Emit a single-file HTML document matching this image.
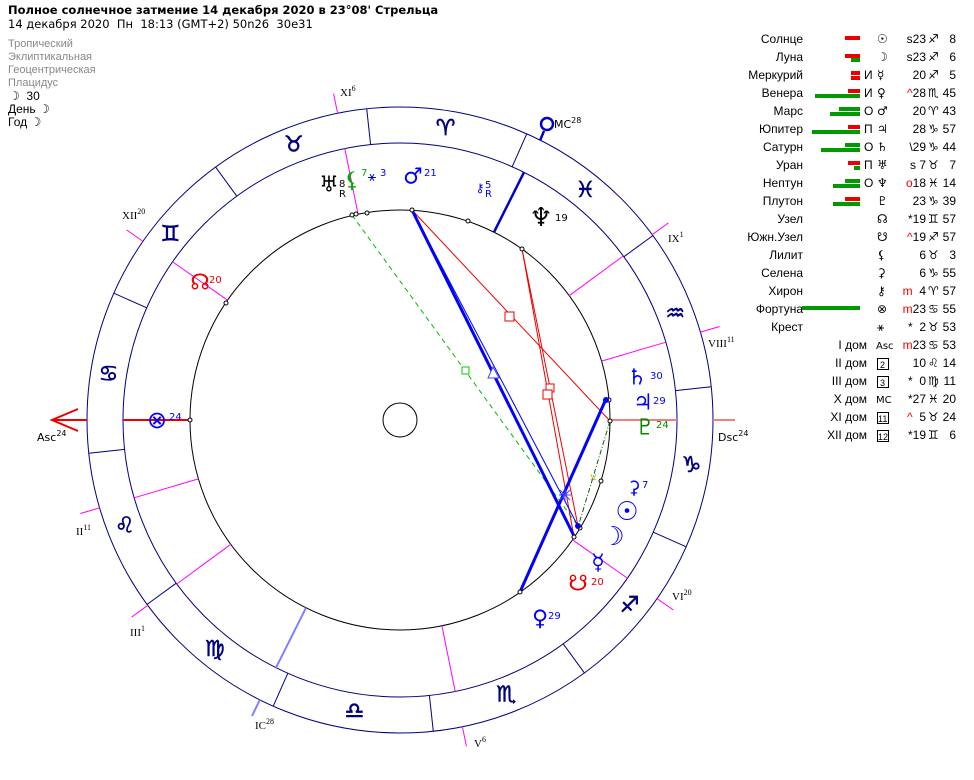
<!DOCTYPE html>
<html><head><meta charset="utf-8"><style>
body{margin:0;width:974px;height:780px;background:#fff;position:relative;overflow:hidden;font-family:"Liberation Sans","DejaVu Sans",sans-serif;}
.t{position:absolute;white-space:nowrap;}
.g{color:#888;font-size:11px;}
.b{position:absolute;height:4px;}
.r{background:#e00;}.gr{background:#090;}
</style></head><body>
<div class="t" style="left:8px;top:3px;font-size:11.5px;font-weight:bold;font-family:'DejaVu Sans',sans-serif;">Полное солнечное затмение 14 декабря 2020 в 23°08' Стрельца</div>
<div class="t" style="left:8px;top:17px;font-size:11.5px;font-family:'DejaVu Sans',sans-serif;">14 декабря 2020&nbsp; Пн&nbsp; 18:13 (GMT+2) 50n26&nbsp; 30e31</div>
<div class="t g" style="left:8px;top:38px;">Тропический</div>
<div class="t g" style="left:8px;top:51px;">Эклиптикальная</div>
<div class="t g" style="left:8px;top:64px;">Геоцентрическая</div>
<div class="t g" style="left:8px;top:77px;">Плацидус</div>
<div class="t" style="left:9px;top:89px;font-size:12px;">☽&nbsp; 30</div>
<div class="t" style="left:8px;top:102px;font-size:12px;">День ☽</div>
<div class="t" style="left:8px;top:115px;font-size:12px;">Год ☽</div>

<svg width="974" height="780" style="position:absolute;left:0;top:0" font-family="DejaVu Sans, sans-serif">
<g fill="none" stroke="#000080" stroke-width="1">
<circle cx="400" cy="420" r="313"/><circle cx="400" cy="420" r="277"/>
<line x1="512.2" y1="166.7" x2="526.8" y2="133.8"/><line x1="370.6" y1="144.6" x2="366.7" y2="108.8"/>
<line x1="236.8" y1="196.2" x2="215.6" y2="167.1"/><line x1="146.7" y1="307.8" x2="113.8" y2="293.2"/>
<line x1="124.6" y1="449.4" x2="88.8" y2="453.3"/><line x1="176.2" y1="583.2" x2="147.1" y2="604.4"/>
<line x1="287.8" y1="673.3" x2="273.2" y2="706.2"/><line x1="429.4" y1="695.4" x2="433.3" y2="731.2"/>
<line x1="563.2" y1="643.8" x2="584.4" y2="672.9"/><line x1="653.3" y1="532.2" x2="686.2" y2="546.8"/>
<line x1="675.4" y1="390.6" x2="711.2" y2="386.7"/><line x1="623.8" y1="256.8" x2="652.9" y2="235.6"/>
</g>
<circle cx="400" cy="420" r="210" fill="none" stroke="#000"/>
<circle cx="400" cy="420" r="17" fill="none" stroke="#000"/>
<g stroke="#f0f" stroke-width="1">
<line x1="358.1" y1="214.2" x2="344.8" y2="148.6"/><line x1="227.6" y1="300.2" x2="172.6" y2="261.9"/>
<line x1="198.4" y1="478.9" x2="134.1" y2="497.8"/><line x1="230.8" y1="544.3" x2="176.8" y2="584"/>
<line x1="441.9" y1="625.8" x2="455.2" y2="691.4"/><line x1="572.4" y1="539.8" x2="627.4" y2="578.1"/>
<line x1="601.6" y1="361.1" x2="665.9" y2="342.2"/><line x1="569.2" y1="295.7" x2="623.2" y2="256"/>
<line x1="337.6" y1="113.3" x2="333.6" y2="93.7"/><line x1="143" y1="241.4" x2="126.6" y2="229.9"/>
<line x1="99.6" y1="507.9" x2="80.4" y2="513.5"/><line x1="147.8" y1="605.3" x2="131.6" y2="617.1"/>
<line x1="462.4" y1="726.7" x2="466.4" y2="746.3"/><line x1="657" y1="598.6" x2="673.4" y2="610"/>
<line x1="700.4" y1="332.1" x2="719.6" y2="326.5"/><line x1="652.2" y1="234.7" x2="668.4" y2="222.9"/>
</g>
<line x1="494" y1="232.2" x2="524" y2="172.3" stroke="#00c" stroke-width="2.5"/>
<line x1="540.2" y1="140.1" x2="544" y2="131" stroke="#00c" stroke-width="2.5"/>
<circle cx="547" cy="124" r="6" fill="none" stroke="#00c" stroke-width="2.5"/>
<line x1="306" y1="607.8" x2="276" y2="667.7" stroke="#8080ff" stroke-width="2"/>
<line x1="259.8" y1="699.9" x2="252" y2="716" stroke="#8080ff" stroke-width="2"/>
<line x1="190" y1="420" x2="123" y2="420" stroke="#e00" stroke-width="2"/>
<line x1="87" y1="420" x2="52" y2="420" stroke="#e00" stroke-width="2"/>
<polyline points="78,409 52,420 78,431" fill="none" stroke="#e00" stroke-width="2"/>
<line x1="610" y1="420" x2="677" y2="420" stroke="#f08080" stroke-width="2"/>
<line x1="713" y1="420" x2="735" y2="420" stroke="#f08080" stroke-width="2"/>
<line x1="352" y1="215" x2="578" y2="526" stroke="#0b0" stroke-dasharray="5,4"/>
<rect x="462" y="367" width="7" height="7" fill="#fff" stroke="#0c0"/>
<line x1="610" y1="421" x2="578" y2="527" stroke="#060" stroke-dasharray="5,2,1,2"/>
<line x1="412" y1="210" x2="610" y2="421" stroke="#e00"/>
<rect x="505" y="312" width="9" height="9" fill="#fff" stroke="#e00"/>
<line x1="522" y1="249" x2="578" y2="526" stroke="#e00"/>
<line x1="522" y1="249" x2="574" y2="537" stroke="#e00"/>
<rect x="546" y="384" width="8" height="8" fill="#fff" stroke="#e00"/>
<rect x="543" y="390" width="9" height="9" fill="#fff" stroke="#e00"/>
<line x1="412" y1="210" x2="578" y2="526" stroke="#00f"/>
<line x1="412" y1="210" x2="574" y2="536" stroke="#00f" stroke-width="3"/>
<line x1="520" y1="592" x2="606" y2="399" stroke="#00f" stroke-width="3"/>
<polygon points="493,367 488,378 499,378" fill="#fff" stroke="#44f"/>
<path d="M559 495h12M565 489v12M560 490l10 10M570 490l-10 10" stroke="#44f" stroke-width="1"/>
<text x="590" y="480" font-size="10" fill="#990">⚺</text>
<g fill="#fff" stroke="#000"><circle cx="412" cy="210" r="2"/><circle cx="574" cy="537" r="2"/><circle cx="580" cy="528" r="2"/><circle cx="520" cy="592" r="2"/><circle cx="609" cy="400" r="2"/><circle cx="610" cy="421" r="2"/><circle cx="601" cy="481" r="2"/><circle cx="522" cy="249" r="2"/><circle cx="352" cy="215" r="2"/><circle cx="356" cy="214" r="2"/><circle cx="367" cy="213" r="2"/><circle cx="468" cy="221" r="2"/><circle cx="226" cy="303" r="2"/><circle cx="190" cy="420" r="2"/></g>
<circle cx="606" cy="400" r="3" fill="#00f"/><circle cx="578" cy="526" r="3" fill="#00f"/>
<g fill="#000080" font-size="22" text-anchor="middle" dominant-baseline="central" stroke="#000080" stroke-width="0.6">
<text x="445.6" y="128.5">♈</text><text x="293.8" y="144.8">♉</text><text x="170.4" y="234.7">♊</text>
<text x="108.5" y="374.4">♋</text><text x="124.8" y="526.2">♌</text><text x="214.7" y="649.6">♍</text>
<text x="354.4" y="711.5">♎</text><text x="506.2" y="695.2">♏</text><text x="629.6" y="605.3">♐</text>
<text x="691.5" y="465.6">♑</text><text x="675.2" y="313.8">♒</text><text x="585.3" y="190.4">♓</text>
</g>
<g font-size="22" text-anchor="middle" dominant-baseline="central">
<text x="329" y="185" fill="#000">♅</text>
<text x="352" y="181" fill="#0a0">⚸</text>
<text x="413" y="177" fill="#00f">♂</text>
<text x="480" y="188" fill="#00f" font-size="12">⚷</text>
<text x="541" y="218" fill="#000" font-size="26">♆</text>
<text x="637" y="378" fill="#00f">♄</text>
<text x="643" y="403" fill="#00f">♃</text>
<text x="645" y="428" fill="#080">♇</text>
<text x="634" y="488" fill="#00f" font-size="18">⚳</text>
<text x="627" y="512" fill="#00f" font-size="26">☉</text>
<text x="613" y="537" fill="#00f" font-size="26">☽</text>
<text x="598" y="563" fill="#00f">☿</text>
<text x="578" y="584" fill="#e00">☋</text>
<text x="540" y="619" fill="#00f">♀</text>
<text x="200" y="283" fill="#e00">☊</text>
<text x="157" y="420" fill="#00f" font-size="24">⊗</text>
<text x="372" y="177" fill="#00f" font-size="14">⚹</text>
</g>
<g font-size="10">
<text x="339" y="187" fill="#000">8</text><text x="339" y="197" fill="#000">R</text>
<text x="361" y="176" fill="#0a0">7</text><text x="380" y="176" fill="#00f">3</text>
<text x="424" y="176" fill="#00f">21</text>
<text x="485" y="188" fill="#00f">5</text><text x="485" y="197" fill="#00f">R</text>
<text x="555" y="221" fill="#000">19</text>
<text x="650" y="379" fill="#00f">30</text><text x="653" y="404" fill="#00f">29</text>
<text x="656" y="428" fill="#080">24</text><text x="642" y="488" fill="#00f">7</text>
<text x="591" y="585" fill="#e00">20</text><text x="548" y="619" fill="#00f">29</text>
<text x="209" y="283" fill="#e00">20</text><text x="169" y="420" fill="#00f">24</text>
</g>
<g font-size="11" fill="#000" font-family="Liberation Serif, serif">
<text x="340" y="96">XI<tspan font-size="8" dy="-5">6</tspan></text>
<text x="122" y="219">XII<tspan font-size="8" dy="-5">20</tspan></text>
<text x="76" y="535">II<tspan font-size="8" dy="-5">11</tspan></text>
<text x="130" y="636">III<tspan font-size="8" dy="-5">1</tspan></text>
<text x="255" y="729">IC<tspan font-size="8" dy="-5">28</tspan></text>
<text x="474" y="747">V<tspan font-size="8" dy="-5">6</tspan></text>
<text x="672" y="600">VI<tspan font-size="8" dy="-5">20</tspan></text>
<text x="708" y="347">VIII<tspan font-size="8" dy="-5">11</tspan></text>
<text x="668" y="242">IX<tspan font-size="8" dy="-5">1</tspan></text>
</g>
<g font-size="11" fill="#000">
<text x="37" y="441">Asc<tspan font-size="8" dy="-5">24</tspan></text>
<text x="718" y="441">Dsc<tspan font-size="8" dy="-5">24</tspan></text>
<text x="554" y="128">MC<tspan font-size="8" dy="-5">28</tspan></text>
</g>
</svg>

<div style="position:absolute;left:0;top:0;width:974px;font-size:12px;">
<div class="b r" style="left:845px;top:36px;width:15px"></div>
<div class="b r" style="left:845px;top:54px;width:15px"></div><div class="b gr" style="left:851px;top:58px;width:9px"></div>
<div class="b r" style="left:851px;top:71px;width:9px"></div><div class="b r" style="left:851px;top:76px;width:9px"></div>
<div class="b r" style="left:848px;top:89px;width:12px"></div><div class="b gr" style="left:815px;top:94px;width:45px"></div>
<div class="b gr" style="left:839px;top:107px;width:21px"></div><div class="b gr" style="left:830px;top:112px;width:30px"></div>
<div class="b r" style="left:848px;top:125px;width:12px"></div><div class="b gr" style="left:812px;top:130px;width:48px"></div>
<div class="b gr" style="left:845px;top:143px;width:15px"></div><div class="b gr" style="left:821px;top:148px;width:39px"></div>
<div class="b r" style="left:848px;top:161px;width:12px"></div><div class="b gr" style="left:854px;top:166px;width:6px"></div>
<div class="b gr" style="left:845px;top:179px;width:15px"></div><div class="b gr" style="left:833px;top:184px;width:27px"></div>
<div class="b r" style="left:845px;top:197px;width:15px"></div><div class="b gr" style="left:833px;top:202px;width:27px"></div>
<div class="b gr" style="left:802px;top:306px;width:58px"></div>
</div>
<svg width="974" height="780" style="position:absolute;left:0;top:0" font-size="12" font-family="Liberation Sans, DejaVu Sans, sans-serif">
<g text-anchor="end" fill="#000">
<text x="803" y="43">Солнце</text><text x="803" y="61">Луна</text><text x="803" y="79">Меркурий</text>
<text x="803" y="97">Венера</text><text x="803" y="115">Марс</text><text x="803" y="133">Юпитер</text>
<text x="803" y="151">Сатурн</text><text x="803" y="169">Уран</text><text x="803" y="187">Нептун</text>
<text x="803" y="205">Плутон</text><text x="803" y="223">Узел</text><text x="803" y="241">Южн.Узел</text>
<text x="803" y="259">Лилит</text><text x="803" y="277">Селена</text><text x="803" y="295">Хирон</text>
<text x="803" y="313">Фортуна</text><text x="803" y="331">Крест</text>
<text x="867" y="349">I дом</text><text x="867" y="367">II дом</text><text x="867" y="385">III дом</text>
<text x="867" y="403">X дом</text><text x="867" y="421">XI дом</text><text x="867" y="439">XII дом</text>
</g>
<g fill="#000">
<text x="864" y="79">И</text><text x="864" y="97">И</text><text x="864" y="115">О</text><text x="864" y="133">П</text>
<text x="864" y="151">О</text><text x="864" y="169">П</text><text x="864" y="187">О</text>
</g>
<g fill="#000" font-family="DejaVu Sans, sans-serif" font-size="12">
<text x="877" y="43">☉</text><text x="877" y="61">☽</text><text x="877" y="79">☿</text><text x="877" y="97">♀</text>
<text x="877" y="115">♂</text><text x="877" y="133">♃</text><text x="877" y="151">♄</text><text x="877" y="169">♅</text>
<text x="877" y="187">♆</text><text x="877" y="205">♇</text><text x="877" y="223">☊</text><text x="877" y="241">☋</text>
<text x="877" y="259">⚸</text><text x="877" y="277">⚳</text><text x="877" y="295">⚷</text><text x="877" y="313">⊗</text>
<text x="877" y="331">⚹</text><text x="876" y="349" font-size="10">Asc</text><text x="876" y="403" font-size="10">MC</text>
</g>
<g fill="none" stroke="#000"><rect x="877.5" y="358.5" width="11" height="11"/><rect x="877.5" y="376.5" width="11" height="11"/><rect x="877.5" y="412.5" width="11" height="11"/><rect x="877.5" y="430.5" width="11" height="11"/></g>
<g font-size="9" fill="#000"><text x="880" y="368">2</text><text x="880" y="386">3</text><text x="878" y="422">11</text><text x="878" y="440">12</text></g>
<g text-anchor="end" fill="#000">
<text x="926" y="43">s23</text><text x="926" y="61">s23</text><text x="926" y="79">20</text>
<text x="926" y="97"><tspan fill="#e00">^</tspan>28</text><text x="926" y="115">20</text><text x="926" y="133">28</text>
<text x="926" y="151">\29</text><text x="926" y="169">s&#160;7</text><text x="926" y="187"><tspan fill="#e00">o</tspan>18</text>
<text x="926" y="205">23</text><text x="926" y="223">*19</text><text x="926" y="241"><tspan fill="#e00">^</tspan>19</text>
<text x="926" y="259">6</text><text x="926" y="277">6</text><text x="926" y="295"><tspan fill="#e00">m</tspan>&#160;&#160;4</text>
<text x="926" y="313"><tspan fill="#e00">m</tspan>23</text><text x="926" y="331">*&#160;&#160;2</text>
<text x="926" y="349"><tspan fill="#e00">m</tspan>23</text><text x="926" y="367">10</text><text x="926" y="385">*&#160;&#160;0</text>
<text x="926" y="403">*27</text><text x="926" y="421"><tspan fill="#e00">^</tspan>&#160;&#160;5</text><text x="926" y="439">*19</text>
<text x="956" y="43">8</text><text x="956" y="61">6</text><text x="956" y="79">5</text><text x="956" y="97">45</text>
<text x="956" y="115">43</text><text x="956" y="133">57</text><text x="956" y="151">44</text><text x="956" y="169">7</text>
<text x="956" y="187">14</text><text x="956" y="205">39</text><text x="956" y="223">57</text><text x="956" y="241">57</text>
<text x="956" y="259">3</text><text x="956" y="277">55</text><text x="956" y="295">57</text><text x="956" y="313">55</text>
<text x="956" y="331">53</text><text x="956" y="349">53</text><text x="956" y="367">14</text><text x="956" y="385">11</text>
<text x="956" y="403">20</text><text x="956" y="421">24</text><text x="956" y="439">6</text>
</g>
<g fill="#000" font-family="DejaVu Sans, sans-serif" font-size="12">
<text x="928" y="43">♐</text><text x="928" y="61">♐</text><text x="928" y="79">♐</text><text x="928" y="97">♏</text>
<text x="928" y="115">♈</text><text x="928" y="133">♑</text><text x="928" y="151">♑</text><text x="928" y="169">♉</text>
<text x="928" y="187">♓</text><text x="928" y="205">♑</text><text x="928" y="223">♊</text><text x="928" y="241">♐</text>
<text x="928" y="259">♉</text><text x="928" y="277">♑</text><text x="928" y="295">♈</text><text x="928" y="313">♋</text>
<text x="928" y="331">♉</text><text x="928" y="349">♋</text><text x="928" y="367">♌</text><text x="928" y="385">♍</text>
<text x="928" y="403">♓</text><text x="928" y="421">♉</text><text x="928" y="439">♊</text>
</g>
</svg>
</body></html>
